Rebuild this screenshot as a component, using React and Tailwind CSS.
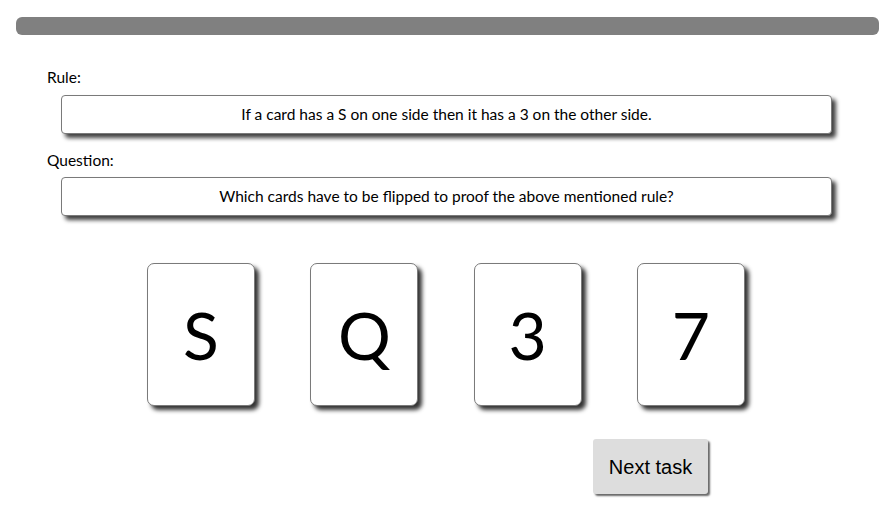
const RULE = "If a card has a S on one side then it has a 3 on the other side.";
const QUESTION = "Which cards have to be flipped to proof the above mentioned rule?";
const CARDS = ["S", "Q", "3", "7"];

function TextBox({ children }) {
  return (
    <div className="mx-[14px] h-[39px] flex items-center justify-center bg-white border border-[#7a7a7a] rounded-[4px] shadow-[4px_4px_4px_rgba(0,0,0,0.75)] text-[15.5px] text-black">
      {children}
    </div>
  );
}

export default function App() {
  return (
    <div className="w-[893px] h-[513px] bg-white overflow-hidden font-['Lato',sans-serif]">
      <div className="pt-[17px] pl-4 pr-[14px]">
        <div className="h-[18px] bg-[#808080] rounded-[6px]" />
      </div>

      <div className="mx-[47px] mt-[33px]">
        <div className="text-[15.5px] leading-[18px] text-black">Rule:</div>
        <div className="mt-[9px]">
          <TextBox>{RULE}</TextBox>
        </div>
        <div className="mt-[17px] text-[15.5px] leading-[18px] text-black">Question:</div>
        <div className="mt-[8px]">
          <TextBox>{QUESTION}</TextBox>
        </div>
      </div>

      <div className="mt-[47px] pl-[147px] flex gap-[55.3px]">
        {CARDS.map(c => (
          <div
            key={c}
            className="w-[108px] h-[143px] flex items-center justify-center bg-white border border-[#7a7a7a] rounded-[7px] shadow-[4px_4px_4px_rgba(0,0,0,0.8)] font-['Lato',sans-serif] text-[66px] text-black">
            {c}
          </div>
        ))}
      </div>

      <div className="mt-[33px] pl-[593px]">
        <button className="w-[115px] h-[55px] bg-[#dddddd] rounded-[3px] shadow-[2px_2px_2px_rgba(0,0,0,0.6)] font-['Liberation_Sans',sans-serif] text-[20px] text-black">
          Next task
        </button>
      </div>
    </div>
  );
}
